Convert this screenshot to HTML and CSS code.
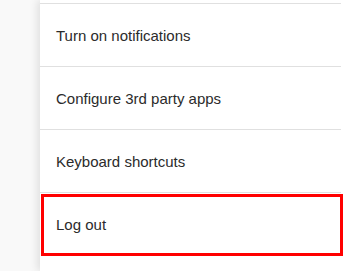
FILE: index.html
```html
<!DOCTYPE html>
<html>
<head>
<meta charset="utf-8">
<link rel="stylesheet" href="styles.css">
</head>
<body>
<div class="page">
  <div class="panel">
    <ul class="menu">
      <li class="item">Turn on notifications</li>
      <li class="item">Configure 3rd party apps</li>
      <li class="item">Keyboard shortcuts</li>
      <li class="item logout">Log out</li>
    </ul>
  </div>
</div>
</body>
</html>
```
FILE: styles.css
```css
html, body {
  margin: 0;
  padding: 0;
  background: #f9f9f9;
  font-family: "Liberation Sans", Arial, sans-serif;
}
.page {
  display: flex;
  height: 271px;
  overflow: hidden;
}
.panel {
  margin-left: 40px;
  width: 305px;
  background: #fff;
  box-shadow: -3px 0 8px rgba(0, 0, 0, 0.1);
  padding-top: 3px;
}
.menu {
  list-style: none;
  margin: 0 4px 0 0;
  padding: 0;
}
.item {
  display: flex;
  align-items: center;
  height: 62px;
  border-top: 1px solid #e0e0e0;
  padding-left: 16px;
  font-size: 15px;
  color: #2b2b2b;
}
.logout {
  position: relative;
}
.logout::after {
  content: "";
  position: absolute;
  left: 1px;
  top: 1px;
  width: 302px;
  height: 62px;
  box-sizing: border-box;
  border: 3px solid #ff0000;
}
```
